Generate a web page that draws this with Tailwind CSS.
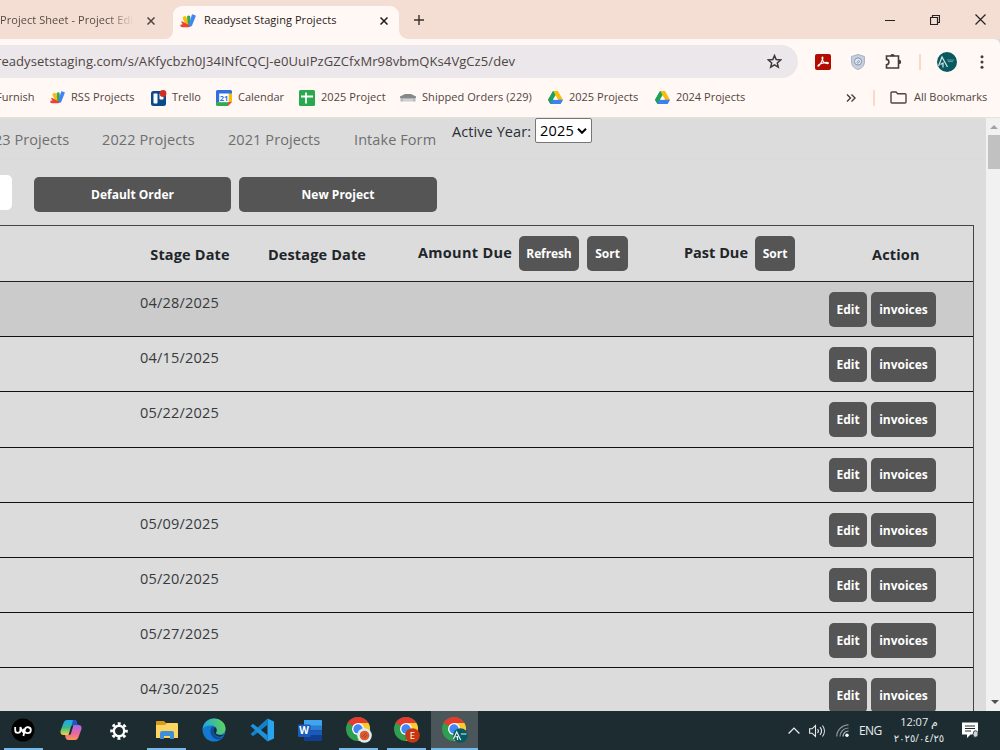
<!DOCTYPE html>
<html lang="en">
<head>
    <meta charset="UTF-8">
    <meta name="viewport" content="width=device-width, initial-scale=1.0">
    <title>Readyset Staging Projects</title>
    <script src="https://cdn.jsdelivr.net/npm/@tailwindcss/browser@4"></script>
</head>
<body class="w-[1000px] h-[750px] overflow-hidden bg-[#dcdcdc] font-['Open_Sans','Noto_Sans',sans-serif] text-[#212529]">
    <!-- Shared icons -->
    <svg class="hidden">
        <symbol id="script" viewBox="0 0 16 16">
            <rect x="4.600" y="3" width="3.800" height="10" rx="1.700" transform="rotate(-26 6 9)" fill="#fbbc04"/>
            <path d="M7 3.500q1.500-2 3.200-.2L11 13H8z" fill="#34a853"/>
            <path d="m12 1.200 3.200 1c.6.2.7.6.5 1.100L12.300 12c-.6 1.700-2.800 2.300-3.800.9z" fill="#4285f4"/>
            <path d="M2 8.300Q.8 8.500 1.500 9.800L3 11.300Q0 11 .2 12.800.6 14.200 2.500 14.200H9q1.500-.4.600-1.800z" fill="#ea4335"/>
        </symbol>
        <symbol id="drive" viewBox="0 0 16 14">
            <path d="M5.400 0h5.200L8 4.600 2.700 14 0 9.300z" fill="#1fa15b"/>
            <path d="M5.400 0h5.200L16 9.300h-5.300z" fill="#fbbc04"/>
            <path d="M0 9.300h16L13.300 14H2.700z" fill="#3f7ff0"/>
            <path d="M5.400 0 0 9.300 2.700 14 8 4.600z" fill="#1fa15b"/>
            <path d="M5.300 9.300H16L13.300 14H2.700z" fill="#3f7ff0"/>
            <path d="M8 4.600 10.700 9.300H5.300z" fill="#fff8f5"/>
        </symbol>
        <symbol id="chrome" viewBox="0 0 24 24">
            <circle cx="12" cy="12" r="12" fill="#2f9e4f"/>
            <path d="M12 12 1.600 6A12 12 0 0 1 22.400 6z" fill="#e33b2e"/>
            <path d="M12 6h10.400A12 12 0 0 1 12 24l5.200-9z" fill="#fcc934"/>
            <circle cx="12" cy="12" r="6" fill="#fff"/>
            <circle cx="12" cy="12" r="4.700" fill="#4285f4"/>
        </symbol>
    </svg>

    <div class="flex flex-col h-full">
        <!-- Tab strip -->
        <div class="flex h-[39px] shrink-0 bg-[#f4ddd2] text-[11px]">
            <div class="flex w-[165px] items-center pt-[2px]">
                <span class="w-[135px] overflow-hidden whitespace-nowrap bg-linear-to-r from-[#51443e] from-80% to-[#f4ddd2] to-99% bg-clip-text tracking-[0.06px] text-transparent">Project Sheet - Project Edi</span>
                <svg class="ml-[12px] size-[8px]" viewBox="0 0 8 8" stroke="#51443e" stroke-width="1.500"><path d="m.5.5 7 7m0-7-7 7"/></svg>
            </div>
            <div class="flex w-[8px] items-end bg-[#fff8f5]"><div class="h-full w-full rounded-br-[9px] bg-[#f4ddd2]"></div></div>
            <div class="flex w-[226px] bg-[#f4ddd2] pt-[6px]">
                <div class="flex w-full items-center rounded-t-[9px] bg-[#fff8f5] pl-[7px] pb-[4px]">
                    <svg class="size-[16px]"><use href="#script"/></svg>
                    <span class="ml-[8px] w-[176px] whitespace-nowrap tracking-[0.06px] text-[#1f1b19]">Readyset Staging Projects</span>
                    <svg class="size-[8px]" viewBox="0 0 8 8" stroke="#1f1b19" stroke-width="1.500"><path d="m.5.5 7 7m0-7-7 7"/></svg>
                </div>
            </div>
            <div class="flex w-[10px] bg-[#fff8f5]"><div class="h-full w-full rounded-bl-[9px] bg-[#f4ddd2]"></div></div>
            <svg class="ml-[5px] mt-[15px] size-[10px]" viewBox="0 0 10 10" stroke="#3b302b" stroke-width="1.400"><path d="M5 0v10M0 5h10"/></svg>
            <div class="ml-auto flex items-center gap-[35px] pr-[14px]">
                <svg class="size-[10px]" viewBox="0 0 10 10" stroke="#222"><path d="M0 5.500h10"/></svg>
                <svg class="size-[10px]" viewBox="0 0 10 10" fill="none" stroke="#222" stroke-width="1.200"><path d="M.5 2.500h7v7h-7zM2.500 2.500v-2h7v7h-2"/></svg>
                <svg class="size-[11px]" viewBox="0 0 11 11" stroke="#222" stroke-width="1.200"><path d="m.5.5 10 10m0-10-10 10"/></svg>
            </div>
        </div>

        <!-- Address bar -->
        <div class="flex h-[45px] shrink-0 items-center rounded-tr-[6px] bg-[#fff8f5]">
            <div class="flex h-[33px] w-[798px] items-center rounded-r-full bg-[#ece7ea]">
                <span class="-ml-[4px] w-[771px] whitespace-nowrap pt-px text-[13px] tracking-[0.08px] text-[#4d4544]">readysetstaging.com/s/AKfycbzh0J34INfCQCJ-e0UuIPzGZCfxMr98vbmQKs4VgCz5/dev</span>
                <svg class="size-[15px]" viewBox="0 0 15 15" fill="none" stroke="#40393a" stroke-width="1.500"><path d="m7.500 1.600 1.700 4 4.400.4-3.300 2.900 1 4.300-3.800-2.300-3.800 2.300 1-4.300L1.400 6l4.400-.4z"/></svg>
            </div>
            <svg class="ml-[17px] size-[16px]" viewBox="0 0 16 16"><rect width="16" height="16" rx="2" fill="#b30b00"/><path d="M7.500 3c-1 0 .2 4 1.300 5.200C10 9.600 13.500 10 13.400 9c-.1-1.100-5.400-.4-8.400 1-2.400 1.200-2.300 2.400-1.400 2C5.400 11 9 3 7.500 3z" fill="none" stroke="#fff" stroke-width="1.200"/></svg>
            <svg class="ml-[20px] h-[16px] w-[14px]" viewBox="0 0 14 16"><path d="M7 .5 13.400 2.500v5.500c0 4-3 6.500-6.400 7.500C3.600 14.500.6 12 .6 8V2.500z" fill="#c8d0de" stroke="#a4b0c4"/><circle cx="7" cy="7.500" r="3.600" fill="#e4e8f0" stroke="#8595b0"/><path d="M5.500 8.500c1 1 3 .3 3-1s-2-1-2 .2" fill="none" stroke="#8595b0"/></svg>
            <svg class="ml-[20px] h-[17px] w-[17px]" viewBox="0 0 17 17" fill="none" stroke="#463c39" stroke-width="1.600"><path d="M1.500 3h12v12H1.500v-3.300c3.200-.2 3.200-5.100 0-5.300z"/><path d="M6.200 2.500a1.400 1.200 0 0 1 2.600 0zM14 7.500a1.400 1.400 0 0 1 0 2.800z" fill="#463c39"/></svg>
            <div class="ml-[17px] h-[16px] w-[2px] bg-[#fbd9c9]"></div>
            <svg class="ml-[16px] size-[20px]" viewBox="0 0 20 20"><circle cx="10" cy="10" r="10" fill="#075a61"/><path d="M1.500 14 5 5l5.500 10M3.500 12.500 6 11v4.500" fill="none" stroke="#d9e8e8" stroke-width="1.200"/><path d="M10 8h7M11 9.500h5" stroke="#7fa9ac" stroke-width=".8"/></svg>
            <svg class="ml-[23px] h-[14px] w-[4px]" viewBox="0 0 4 14" fill="#463c39"><circle cx="2" cy="1.700" r="1.500"/><circle cx="2" cy="7" r="1.500"/><circle cx="2" cy="12.300" r="1.500"/></svg>
        </div>

        <!-- Bookmarks -->
        <div class="flex h-[34px] shrink-0 items-center border-b border-[#e6dfdc] bg-[#fff8f5] pb-[6px] text-[11px] whitespace-nowrap text-[#51443e]">
            <span class="-ml-[4px] w-[54px]">Furnish</span>
            <svg class="size-[15px]"><use href="#script"/></svg>
            <span class="ml-[6px] w-[80px] tracking-[0.06px]">RSS Projects</span>
            <svg class="size-[16px]" viewBox="0 0 16 16"><rect y="1" width="15" height="15" rx="2.500" fill="#0b4a8b"/><rect x="2.500" y="3.500" width="4" height="10" rx=".8" fill="#fff"/><rect x="8.500" y="3.500" width="4" height="6" rx=".8" fill="#fff"/><circle cx="12" cy="3.500" r="3.400" fill="#cf2e22"/></svg>
            <span class="ml-[5px] w-[44px]">Trello</span>
            <svg class="size-[16px]" viewBox="0 0 16 16"><path d="M1.500 0h13A1.500 1.500 0 0 1 16 1.500V12H0V1.500A1.500 1.500 0 0 1 1.500 0z" fill="#2f6fe0"/><path d="M12.500 3.500H16V12h-3.500z" fill="#fbbc04"/><path d="M0 12h12v4H1.500A1.500 1.500 0 0 1 0 14.500z" fill="#34a853"/><path d="M12 12h4l-4 4z" fill="#ea4335"/><path d="M3.200 3.500h9.600v8.700H3.200z" fill="#fff"/><text x="8" y="10.800" text-anchor="middle" font-size="7.500" font-weight="700" fill="#2f6fe0">21</text></svg>
            <span class="ml-[6px] w-[61px]">Calendar</span>
            <svg class="size-[16px]" viewBox="0 0 16 16"><rect width="16" height="16" rx="1.500" fill="#2aa84f"/><path d="M7 2.500v11M2 6.500h12" stroke="#fff" stroke-width="1.800"/></svg>
            <span class="ml-[6px] w-[79px] tracking-[0.06px]">2025 Project</span>
            <svg class="h-[9px] w-[16px]" viewBox="0 0 16 9"><path d="M0 3.500 5 1h6l5 2.500V5H0z" fill="#85898a"/><path d="M.5 5h15v3.500h-3V6h-9v2.500h-3z" fill="#b4b7b8"/><path d="M3.500 6h9v2.500h-9z" fill="#cfd1d1"/></svg>
            <span class="ml-[6px] w-[126px] tracking-[0.06px]">Shipped Orders (229)</span>
            <svg class="h-[13px] w-[15px]"><use href="#drive"/></svg>
            <span class="ml-[6px] w-[86px]">2025 Projects</span>
            <svg class="h-[13px] w-[15px]"><use href="#drive"/></svg>
            <span class="ml-[6px] w-[170px]">2024 Projects</span>
            <svg class="h-[8px] w-[10px]" viewBox="0 0 10 8" fill="none" stroke="#463c39" stroke-width="1.400"><path d="m1 .5 3.500 3.500L1 7.500M5.500.5 9 4 5.500 7.500"/></svg>
            <div class="ml-[17px] h-[16px] w-[2px] bg-[#fbd9c9]"></div>
            <svg class="ml-[15px] h-[13px] w-[17px]" viewBox="0 0 17 13" fill="none" stroke="#51443e" stroke-width="1.400"><path d="M1 11V2q0-1 1-1h4l1.700 1.800H15q1 0 1 1V11q0 1-1 1H2q-1 0-1-1z"/></svg>
            <span class="ml-[7px]">All Bookmarks</span>
        </div>

        <!-- Page -->
        <div class="flex min-h-0 flex-1">
            <div class="w-[986px] overflow-hidden">
                <nav class="flex h-[42px] border-b border-[#d9d9df] text-[14.500px] whitespace-nowrap text-[#6f6f6f]">
                    <a class="-ml-[6px] mt-[11px] w-[108px] tracking-[0.06px]">23 Projects</a>
                    <a class="mt-[11px] w-[126px] tracking-[0.12px]">2022 Projects</a>
                    <a class="mt-[11px] w-[126px] tracking-[0.08px]">2021 Projects</a>
                    <a class="mt-[11px] w-[98px] tracking-[0.08px]">Intake Form</a>
                    <label class="mt-[3px] w-[83px] tracking-[0.08px] text-[#2b2f33]">Active Year:</label>
                    <div class="flex h-[25px] w-[57px] items-center rounded-[2px] border border-[#767676] bg-white pl-[4px] pt-px text-black">
                        <span class="w-[37px] tracking-[0.2px]">2025</span>
                        <svg class="h-[6px] w-[10px]" viewBox="0 0 10 6" fill="none" stroke="#000" stroke-width="2"><path d="m1 .8 4 4 4-4"/></svg>
                    </div>
                </nav>

                <div class="flex h-[65px] pt-[17px] text-[12px] font-bold text-white">
                    <div class="-mt-[2px] h-[35px] w-[12px] rounded-r-[5px] bg-white"></div>
                    <button class="ml-[22px] h-[35px] w-[197px] rounded-[5px] bg-[#555]">Default Order</button>
                    <button class="ml-[8px] h-[35px] w-[198px] rounded-[5px] bg-[#555]">New Project</button>
                </div>

                <div class="w-[974px] border-t border-r border-[#444] text-[14.500px]">
                    <div class="flex h-[56px] items-center border-b border-[#222] pl-[128px] font-bold whitespace-nowrap">
                        <div class="w-[124px] pt-[2px] text-center tracking-[0.16px]">Stage Date</div>
                        <div class="w-[130px] pt-[2px] text-center tracking-[0.14px]">Destage Date</div>
                        <div class="flex w-[282px] items-center pl-[36px]">
                            <span class="-mt-[2px] w-[101px] tracking-[0.3px]">Amount Due</span>
                            <button class="h-[35px] w-[60px] rounded-[5px] bg-[#555] text-[12px] tracking-[-0.1px] text-white">Refresh</button>
                            <button class="ml-[8px] h-[35px] w-[41px] rounded-[5px] bg-[#555] text-[12px] text-white">Sort</button>
                        </div>
                        <div class="flex w-[151px] items-center pl-[20px]">
                            <span class="-mt-[2px] w-[71px]">Past Due</span>
                            <button class="h-[35px] w-[40px] rounded-[5px] bg-[#555] text-[12px] text-white">Sort</button>
                        </div>
                        <div class="pl-[57px] pt-[2px] tracking-[0.15px]">Action</div>
                    </div>
                    <div id="projectRows"></div>
                </div>
            </div>

            <!-- Scrollbar -->
            <div class="flex w-[14px] flex-col items-end bg-[#f1f1f1]">
                <svg class="mt-[7px] mr-[2px] h-[4px] w-[8px]" viewBox="0 0 8 4" fill="#a3a3a3"><path d="m4 0 4 4H0z"/></svg>
                <div class="mt-[6px] h-[34px] w-[12px] bg-[#c1c1c1]"></div>
                <svg class="mt-auto mr-[1px] mb-[7px] h-[4px] w-[8px]" viewBox="0 0 8 4" fill="#505050"><path d="m0 0 4 4 4-4z"/></svg>
            </div>
        </div>

        <!-- Taskbar -->
        <div class="flex h-[39px] shrink-0 bg-[#1d2c31] text-[#e8ecec]">
            <div class="ml-[4px] flex h-full w-[39px] items-center justify-center border-b-2 border-[#76b9ed] pr-[1px]">
                <svg class="size-[24px]" viewBox="0 0 24 24"><circle cx="12" cy="12" r="11.500" fill="#000"/><path d="M4.200 9v3.300a2.600 2.600 0 0 0 5.200 0V9c1 3.500 2 5 3.500 6M12.400 18l1.500-6.500a3 3 0 1 1 2.900 3.700c-2.300 0-3.900-2.200-4.500-4.500" fill="none" stroke="#fff" stroke-width="1.800"/></svg>
            </div>
            <div class="ml-[9px] flex w-[38px] items-center justify-center pb-[1px]">
                <svg class="size-[22px]" viewBox="0 0 22 22">
                    <defs>
                        <linearGradient id="cp1" x2="0" y2="1"><stop stop-color="#20a5ef"/><stop offset=".5" stop-color="#35bd8e"/><stop offset="1" stop-color="#f6d33c"/></linearGradient>
                        <linearGradient id="cp2" x2="0" y2="1"><stop stop-color="#a168ef"/><stop offset=".6" stop-color="#f0689a"/><stop offset="1" stop-color="#f79a52"/></linearGradient>
                    </defs>
                    <path d="M7 1h7.500q1.500 0 2 1.500L17.500 6H13q-1.500 0-2 1.500L8.500 16H3.500Q0 16 .5 12L3.500 4Q4.500 1 7 1z" fill="url(#cp1)"/>
                    <path d="M15 21H8.500Q6 21 5.500 18.500L5 16h4q1.500 0 2-1.500L13.500 6h5Q22 6 21.500 10L18.500 18Q17.500 21 15 21z" fill="url(#cp2)"/>
                    <path d="M13 1h1.500q1.500 0 2 1.500L17.500 6H13q-1 0-1.500 1z" fill="#1f55c6"/>
                </svg>
            </div>
            <div class="ml-[9px] flex w-[39px] items-center justify-center">
                <svg class="size-[18px]" viewBox="0 0 18 18" fill="none" stroke="#fff"><circle cx="9" cy="9" r="5.200" stroke-width="2.400"/><circle cx="9" cy="9" r="7.400" stroke-width="2.800" stroke-dasharray="2.900 2.910" stroke-dashoffset="1.450"/></svg>
            </div>
            <div class="ml-[9px] flex h-full w-[39px] items-center justify-center border-b-2 border-[#76b9ed]">
                <svg class="h-[18px] w-[22px]" viewBox="0 0 22 18"><path d="M0 1q0-1 1-1h7l2 2h11v4H0z" fill="#d99a1c"/><path d="M0 4h9l2-2h10q1 0 1 1v14H0z" fill="#fcd462"/><path d="M4 18v-6q0-2 2-2h10q2 0 2 2v6h-4v-3H8v3z" fill="#3d8fdc"/></svg>
            </div>
            <div class="ml-[9px] flex w-[38px] items-center justify-center pb-[1px]">
                <svg class="size-[24px]" viewBox="0 0 24 24">
                    <defs><linearGradient id="eg" y1=".4" y2=".2"><stop stop-color="#1fa6dd"/><stop offset="1" stop-color="#62d553"/></linearGradient></defs>
                    <circle cx="12" cy="12" r="11.500" fill="#1479cf"/>
                    <path d="M.6 11C1.500 4.500 6.500.5 12 .5c6.500 0 11.500 4.500 11.500 10 0 4-3 6-6 6-2.500 0-4-1-3.500-2 1.500-2 .5-6.500-4-7C6 7 2 8.500.6 11z" fill="url(#eg)"/>
                    <path d="M10.500 8.500c-3.500 2.500-3 10 3 12.500 3 1 6 0 8-2-3 1.500-9 .5-9-5-.5-2 1-3 .8-4-.3-1-1.800-1.700-2.800-1.500z" fill="#0c4e9c"/>
                    <path d="M14 14.500c1.500-2 .5-4.500-.8-5.200-1.200 1-1.700 2.700-1.200 4.700.4 2 2 3.700 4 4.500 3 .8 5.500-.5 6-2-4 1.500-8.500 0-8-2z" fill="#1d2c31"/>
                </svg>
            </div>
            <div class="ml-[9px] flex w-[39px] items-center justify-center pb-[1px]">
                <svg class="size-[24px]" viewBox="0 0 24 24"><path d="M17.500.5 24 3.500v17l-6.500 3z" fill="#2aa4f0"/><path d="M17.500.5v6.300L3 18.200.5 16z" fill="#1580cb"/><path d="M.5 8 3 5.800l14.500 11.400v6.300z" fill="#1c92dc"/></svg>
            </div>
            <div class="ml-[9px] flex w-[39px] items-center justify-center pb-[1px]">
                <svg class="h-[21px] w-[24px]" viewBox="0 0 24 21"><path d="M6 0h17q1 0 1 1v5H6z" fill="#41a5ee"/><path d="M6 5.500h18v5H6z" fill="#2b7cd3"/><path d="M6 10.500h18v5H6z" fill="#185abd"/><path d="M6 15.500h18V20q0 1-1 1H6z" fill="#103f91"/><rect y="4.500" width="12.500" height="12.500" rx="1" fill="#185abd"/><text x="6.200" y="14.300" text-anchor="middle" font-size="10" font-weight="700" fill="#fff">W</text></svg>
            </div>
            <div class="ml-[10px] flex h-full w-[39px] items-center justify-center border-b-2 border-[#76b9ed]">
                <svg class="size-[26px]" viewBox="0 0 26 26"><use href="#chrome" width="24" height="24"/><circle cx="18.500" cy="18.500" r="7.300" fill="#d9f0f2"/><circle cx="18.500" cy="18.500" r="4.800" fill="#e25a2b"/><path d="m16 20 4-4m-2 5 3-3" stroke="#8a4a35"/></svg>
            </div>
            <div class="ml-[9px] flex h-full w-[39px] items-center justify-center border-b-2 border-[#76b9ed]">
                <svg class="size-[26px]" viewBox="0 0 26 26"><use href="#chrome" width="24" height="24"/><circle cx="18.500" cy="18.500" r="7.300" fill="#c5380f"/><text x="18.500" y="22" text-anchor="middle" font-size="9.500" fill="#fff">E</text></svg>
            </div>
            <div class="ml-[5px] flex h-full w-[47px] items-center justify-center border-b-2 border-[#76b9ed] bg-[#4a5659]">
                <svg class="size-[26px]" viewBox="0 0 26 26"><use href="#chrome" width="24" height="24"/><circle cx="18.500" cy="18.500" r="7.300" fill="#075a61"/><path d="m11.500 22 3.200-7 4 8M13.500 20l2-.5V23M19 17h5.500" fill="none" stroke="#e4f0f0" stroke-width="1.200"/></svg>
            </div>
            <div class="ml-auto flex items-center pr-[21px]">
                <svg class="h-[8px] w-[12px]" viewBox="0 0 12 8" fill="none" stroke="#e8ecec" stroke-width="1.300"><path d="m.6 6.500 5.400-5.400 5.400 5.400"/></svg>
                <svg class="ml-[9px] h-[14px] w-[17px]" viewBox="0 0 17 14" fill="none" stroke="#e8ecec" stroke-width="1.100"><path d="M.6 4.800h2.500L6.500 1.500v11L3.100 9.200H.6zM8.500 5a3 3 0 0 1 0 4M11 3.200a6 6 0 0 1 0 7.600M13.500 1.500a9 9 0 0 1 0 11"/></svg>
                <svg class="ml-[10px] h-[13px] w-[13px]" viewBox="0 0 13 13" fill="none" stroke-width="1.200"><path d="M.7 12.500A12 12 0 0 1 12.500.8M4 12.500A8.500 8.500 0 0 1 12.500 4" stroke="#88979a"/><path d="M7 12.500a5.500 5.500 0 0 1 5.500-5.500" stroke="#b9c3c4"/><circle cx="11" cy="11.200" r="1.700" fill="#fff"/></svg>
                <span class="ml-[10px] w-[34px] text-[12px] tracking-[-0.6px]">ENG</span>
                <div class="flex w-[52px] flex-col text-center text-[11px] leading-[17px] whitespace-nowrap font-['Open_Sans','DejaVu_Sans',sans-serif]">
                    <span class="-mt-[2px] tracking-[-0.5px]">12:07 م</span>
                    <span class="text-[10px]">٢٠٢٥/٠٤/٢٥</span>
                </div>
                <svg class="ml-[17px] h-[17px] w-[17px]" viewBox="0 0 17 17"><path d="M0 .5h16v12H8.500L5 16v-3.500H0z" fill="#fff"/><path d="M3 4h10M3 6.500h10M3 9h6" stroke="#1d2c31"/><path d="M12 9q4-1 4 3t-4 3q-2-2 0-6z" fill="#cfd6d7" stroke="#1d2c31" stroke-width=".8"/></svg>
            </div>
        </div>
    </div>

    <script>
        const stageDates = ['04/28/2025', '04/15/2025', '05/22/2025', '', '05/09/2025', '05/20/2025', '05/27/2025', '04/30/2025'];

        document.getElementById('projectRows').innerHTML = stageDates.map((date, i) => `
            <div class="flex h-[55.2px] border-b border-[#111] pl-[140px] ${i === 0 ? 'bg-[#cbcbcb]' : ''}">
                <span class="mt-[10px] w-[689px] tracking-[0.2px] text-[#363a3e]">${date}</span>
                <div class="flex gap-[4px] pt-[10px] text-[12px] font-bold text-white">
                    <button class="h-[34.500px] w-[38px] rounded-[5px] bg-[#555] pt-px">Edit</button>
                    <button class="h-[34.500px] w-[65px] rounded-[5px] bg-[#555] pt-px">invoices</button>
                </div>
            </div>`).join('');
    </script>
</body>
</html>
